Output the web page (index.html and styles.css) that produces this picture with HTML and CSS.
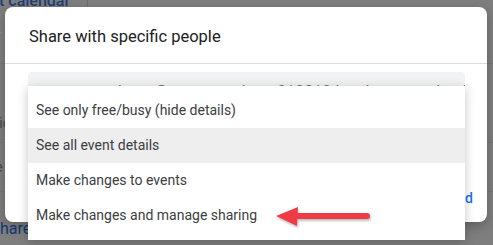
FILE: index.html
```html
<!DOCTYPE html>
<html lang="en">
<head>
    <meta charset="UTF-8">
    <meta name="viewport" content="width=device-width, initial-scale=1.0">
    <title>Share with specific people</title>
    <link rel="stylesheet" href="styles.css">
</head>
<body>
    <!-- page behind the dialog, dimmed -->
    <div class="backdrop">
        <div class="topbar">
            <span class="crumb">t calendar</span>
        </div>
        <div class="bg-row row-a"><span class="bg-text">Integrate calendar</span></div>
        <div class="bg-row row-p"><span class="bg-text dark">Access permissions</span></div>
        <div class="bg-row row-e"><span class="bg-text dark">Share with people</span></div>
        <div class="bg-row row-s"><span class="bg-text link">hare</span></div>
    </div>

    <div class="dialog">
        <div class="dialog-title">Share with specific people</div>

        <div class="dialog-body">
            <div class="field-wrap">
                <div class="field">apartmentheat.@apartmentheat.210312.local.group.calendar.int</div>

                <div class="menu">
                    <div class="menu-item">See only free/busy (hide details)</div>
                    <div class="menu-item active">See all event details</div>
                    <div class="menu-item">Make changes to events</div>
                    <div class="menu-item">Make changes and manage sharing</div>
                </div>
            </div>
        </div>

        <div class="dialog-actions">
            <button class="text-btn">Send</button>
        </div>
    </div>

    <svg class="arrow" width="110" height="35" viewBox="0 0 110 35">
        <line x1="24" y1="16" x2="97" y2="16" stroke="#ee3b45" stroke-width="6" stroke-linecap="round"/>
        <polygon points="6,16 28,7 27,26" fill="#ee3b45"/>
    </svg>
</body>
</html>
```

FILE: styles.css
```css
body {
    margin: 0;
    width: 493px;
    height: 245px;
    overflow: hidden;
    position: relative;
    background-color: #7e7e7e;
    font-family: Roboto, 'Noto Sans', sans-serif;
}

/* page behind the dialog */
.backdrop {
    display: flex;
    flex-direction: column;
}

.topbar {
    height: 7px;
    overflow: hidden;
    display: flex;
    align-items: flex-end;
}

.crumb {
    display: block;
    width: 88px;
    margin-left: -1px;
    line-height: 12px;
    font-size: 16px;
    font-weight: 500;
    color: #1f3e73;
    border-right: 1px solid #6e6e6e;
}

.bg-row {
    border-bottom: 1px solid #767676;
    display: flex;
    align-items: center;
    overflow: hidden;
    white-space: nowrap;
}

.row-a { height: 56px; }
.row-p { height: 78px; }
.row-e { height: 48px; }
.row-s { height: 52px; border-bottom: none; }

.bg-text {
    font-size: 14px;
    color: #9a9a9a;
    margin-left: -110px;
}

.bg-text.dark {
    color: #4a4a4a;
}

.row-p .bg-text { margin-left: -100px; padding-top: 40px; }
.row-e .bg-text { margin-left: -108px; }
.row-a .bg-text { margin-left: -112px; }

.bg-text.link {
    color: #123a78;
    font-size: 16px;
    margin-left: 0;
    padding-top: 20px;
}

/* dialog */
.dialog {
    position: absolute;
    left: 5px;
    top: 7px;
    width: 482px;
    height: 215px;
    background-color: #fff;
    border-radius: 8px;
    box-shadow: 0 4px 12px rgba(0, 0, 0, 0.25);
    display: flex;
    flex-direction: column;
}

.dialog-title {
    padding: 18px 24px 14px;
    font-size: 16.5px;
    line-height: 24px;
    color: #202124;
    border-bottom: 1px solid #dadce0;
}

.dialog-body {
    padding: 8px 22px 0 23px;
}

.field-wrap {
    position: relative;
}

.field {
    height: 48px;
    box-sizing: border-box;
    padding: 8px 16px;
    background-color: #f1f3f4;
    border-radius: 4px 4px 0 0;
    font-size: 16px;
    line-height: 24px;
    color: #70757a;
    white-space: nowrap;
    overflow: hidden;
}

.menu {
    position: absolute;
    top: 14px;
    left: 0;
    right: 0;
    padding: 7px 0;
    background-color: #fff;
    box-shadow: 0 2px 10px rgba(0, 0, 0, 0.22);
    z-index: 2;
}

.menu-item {
    height: 35px;
    line-height: 35px;
    padding: 0 8px;
    font-size: 14px;
    color: #3c4043;
}

.menu-item.active {
    background-color: #eeeeee;
}

.dialog-actions {
    margin-top: auto;
    display: flex;
    justify-content: flex-end;
    padding: 0 8px 6px;
}

.text-btn {
    border: none;
    background: none;
    padding: 0 6px;
    height: 36px;
    line-height: 36px;
    font-family: Roboto, sans-serif;
    font-size: 14px;
    font-weight: 500;
    color: #1a73e8;
}

.arrow {
    position: absolute;
    left: 270px;
    top: 200px;
    filter: drop-shadow(1px 2px 1px rgba(0, 0, 0, 0.25));
    z-index: 3;
}
```
